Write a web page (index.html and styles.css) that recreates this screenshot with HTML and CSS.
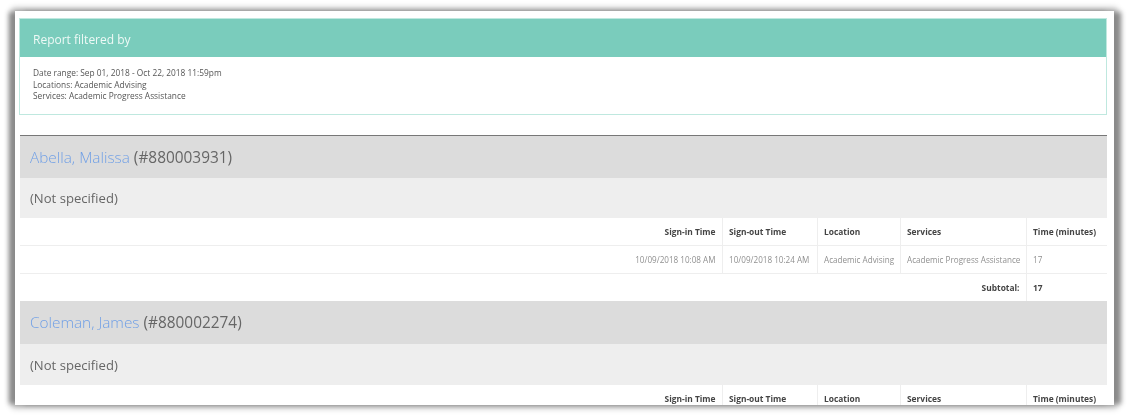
FILE: index.html
```html
<!DOCTYPE html>
<html lang="en">
<head>
<meta charset="utf-8">
<title>Report</title>
<link rel="stylesheet" href="styles.css">
</head>
<body>
<main class="frame">
  <div class="content">
  <section class="filter">
    <h2 class="filter-head">Report filtered by</h2>
    <div class="filter-body">
      <div>Date range: Sep 01, 2018 - Oct 22, 2018 11:59pm</div>
      <div>Locations: Academic Advising</div>
      <div>Services: Academic Progress Assistance</div>
    </div>
  </section>
  <div class="report">
    <h3 class="student student-first"><a href="#">Abella, Malissa</a> (#880003931)</h3>
    <h4 class="group">(Not specified)</h4>
    <table>
      <colgroup><col class="c1"><col class="c2"><col class="c3"><col class="c4"><col class="c5"></colgroup>
      <tr class="head"><th class="right">Sign-in Time</th><th>Sign-out Time</th><th>Location</th><th>Services</th><th>Time (minutes)</th></tr>
      <tr class="data"><td class="right">10/09/2018 10:08 AM</td><td>10/09/2018 10:24 AM</td><td>Academic Advising</td><td>Academic Progress Assistance</td><td>17</td></tr>
      <tr class="total"><th class="right" colspan="4">Subtotal:</th><th>17</th></tr>
    </table>
    <h3 class="student"><a href="#">Coleman, James</a> (#880002274)</h3>
    <h4 class="group group-tall">(Not specified)</h4>
    <table>
      <colgroup><col class="c1"><col class="c2"><col class="c3"><col class="c4"><col class="c5"></colgroup>
      <tr class="head"><th class="right">Sign-in Time</th><th>Sign-out Time</th><th>Location</th><th>Services</th><th>Time (minutes)</th></tr>
    </table>
  </div>
  </div>
</main>
</body>
</html>
```
FILE: styles.css
```css
html, body { margin: 0; padding: 0; background: #fff; }
body { height: 418px; overflow: hidden; padding: 11px 18px 0 15px; box-sizing: border-box; font-family: "Open Sans", sans-serif; color: #555; }
.frame { height: 394px; overflow: hidden; background: #fff; padding: 7px 7px 0 5px; box-sizing: border-box; box-shadow: -7px 0 5px -1px #8a8a8a, 8px 0 5px -1px #8a8a8a, 0 0 6px 3px #bbb; }
.content { filter: blur(0.35px); }
.filter { border: 1px solid #bfe8df; height: 97px; box-sizing: border-box; margin-left: -1px; }
.filter-head { margin: 0; height: 38px; background: #7accbc; color: #eef9f6; font-size: 12px; font-weight: 400; line-height: 41px; padding-left: 13px; }
.filter-body { padding: 10px 13px 0; font-size: 8.35px; line-height: 11.6px; color: #555; }
.report { margin-top: 20px; border-top: 1px solid #777; }
.student { margin: 0; height: 43px; background: #dcdcdc; font-size: 15.4px; font-weight: 400; line-height: 43px; padding-left: 10px; color: #666; }
.student-first { height: 42px; }
.student a { color: #6f9fe6; text-decoration: none; font-weight: 300; font-size: 15.35px; }
.group { margin: 0; height: 40px; background: #eee; font-size: 13.1px; font-weight: 400; line-height: 40px; padding-left: 10px; color: #666; }
.group-tall { height: 41px; line-height: 42px; }
table { width: 1087px; table-layout: fixed; border-collapse: collapse; font-size: 8.4px; }
.c1 { width: 702px; } .c2 { width: 95px; } .c3 { width: 83px; } .c4 { width: 126px; } .c5 { width: 81px; }
th, td { border-left: 1px solid #eee; border-bottom: 1px solid #eee; padding: 0 6px 0 6.5px; text-align: left; white-space: nowrap; overflow: hidden; }
th:first-child, td:first-child { border-left: 0; }
th { font-weight: 700; color: #444; }
td { color: #909090; font-size: 8.12px; }
.right { text-align: right; }
.head { height: 27px; }
.data { height: 28px; }
.total { height: 28px; }
.total th { border-bottom: 0; }
```
